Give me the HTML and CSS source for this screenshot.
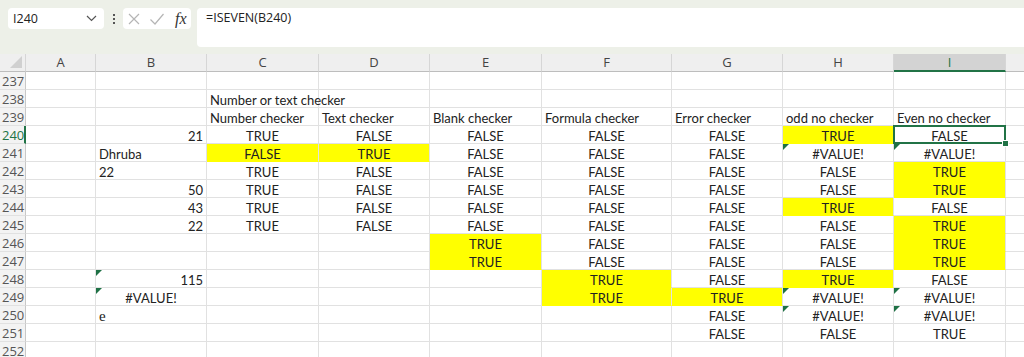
FILE: index.html
```html
<!DOCTYPE html>
<html lang="en">
<head>
    <meta charset="UTF-8">
    <meta name="viewport" content="width=device-width, initial-scale=1.0">
    <title>ISEVEN checker</title>
    <link rel="stylesheet" href="styles.css">
</head>
<body>

    <div class="topbar">
        <div class="namebox">
            <span>I240</span>
            <svg class="chev" width="11" height="7" viewBox="0 0 11 7"><path d="M1 1 L5.5 5.5 L10 1" fill="none" stroke="#555" stroke-width="1.2"/></svg>
        </div>
        <div class="dots"><i></i><i></i><i></i></div>
        <div class="fxbox">
            <svg width="14" height="14" viewBox="0 0 14 14"><path d="M2 2 L12 12 M12 2 L2 12" stroke="#b5b5b5" stroke-width="1.2"/></svg>
            <svg width="16" height="14" viewBox="0 0 16 14"><path d="M1.5 7.5 L6 12 L14.5 2" fill="none" stroke="#b5b5b5" stroke-width="1.2"/></svg>
            <span class="fx">fx</span>
        </div>
        <div class="formula">=ISEVEN(B240)</div>
    </div>

    <div class="sheet">
        <!-- column headers -->
        <div class="corner"><span></span></div>
        <div class="ch">A</div><div class="ch">B</div><div class="ch">C</div><div class="ch">D</div><div class="ch">E</div>
        <div class="ch">F</div><div class="ch">G</div><div class="ch">H</div><div class="ch sel">I</div><div class="ch"></div>

        <div class="rh">237</div>
        <div></div><div></div><div></div><div></div><div></div><div></div><div></div><div></div><div></div><div></div>

        <div class="rh">238</div>
        <div></div><div></div><div class="spill">Number or text checker</div><div></div><div></div><div></div><div></div><div></div><div></div><div></div>

        <div class="rh">239</div>
        <div></div><div></div><div>Number checker</div><div>Text checker</div><div>Blank checker</div><div>Formula checker</div><div>Error checker</div><div>odd no checker</div><div>Even no checker</div><div></div>

        <div class="rh cur">240</div>
        <div></div><div class="r">21</div><div class="c">TRUE</div><div class="c">FALSE</div><div class="c">FALSE</div><div class="c">FALSE</div><div class="c">FALSE</div><div class="c y">TRUE</div><div class="c active">FALSE</div><div></div>

        <div class="rh">241</div>
        <div></div><div>Dhruba</div><div class="c y">FALSE</div><div class="c y">TRUE</div><div class="c">FALSE</div><div class="c">FALSE</div><div class="c">FALSE</div><div class="c tri">#VALUE!</div><div class="c tri">#VALUE!</div><div></div>

        <div class="rh">242</div>
        <div></div><div>22</div><div class="c">TRUE</div><div class="c">FALSE</div><div class="c">FALSE</div><div class="c">FALSE</div><div class="c">FALSE</div><div class="c">FALSE</div><div class="c y">TRUE</div><div></div>

        <div class="rh">243</div>
        <div></div><div class="r">50</div><div class="c">TRUE</div><div class="c">FALSE</div><div class="c">FALSE</div><div class="c">FALSE</div><div class="c">FALSE</div><div class="c">FALSE</div><div class="c y">TRUE</div><div></div>

        <div class="rh">244</div>
        <div></div><div class="r">43</div><div class="c">TRUE</div><div class="c">FALSE</div><div class="c">FALSE</div><div class="c">FALSE</div><div class="c">FALSE</div><div class="c y">TRUE</div><div class="c">FALSE</div><div></div>

        <div class="rh">245</div>
        <div></div><div class="r">22</div><div class="c">TRUE</div><div class="c">FALSE</div><div class="c">FALSE</div><div class="c">FALSE</div><div class="c">FALSE</div><div class="c">FALSE</div><div class="c y">TRUE</div><div></div>

        <div class="rh">246</div>
        <div></div><div></div><div></div><div></div><div class="c y">TRUE</div><div class="c">FALSE</div><div class="c">FALSE</div><div class="c">FALSE</div><div class="c y">TRUE</div><div></div>

        <div class="rh">247</div>
        <div></div><div></div><div></div><div></div><div class="c y">TRUE</div><div class="c">FALSE</div><div class="c">FALSE</div><div class="c">FALSE</div><div class="c y">TRUE</div><div></div>

        <div class="rh">248</div>
        <div></div><div class="r tri">115</div><div></div><div></div><div></div><div class="c y">TRUE</div><div class="c">FALSE</div><div class="c y">TRUE</div><div class="c">FALSE</div><div></div>

        <div class="rh">249</div>
        <div></div><div class="c tri">#VALUE!</div><div></div><div></div><div></div><div class="c y">TRUE</div><div class="c y">TRUE</div><div class="c tri">#VALUE!</div><div class="c tri">#VALUE!</div><div></div>

        <div class="rh">250</div>
        <div></div><div class="serif">e</div><div></div><div></div><div></div><div></div><div class="c">FALSE</div><div class="c tri">#VALUE!</div><div class="c tri">#VALUE!</div><div></div>

        <div class="rh">251</div>
        <div></div><div></div><div></div><div></div><div></div><div></div><div class="c">FALSE</div><div class="c">FALSE</div><div class="c">TRUE</div><div></div>

        <div class="rh">252</div>
        <div></div><div></div><div></div><div></div><div></div><div></div><div></div><div></div><div></div><div></div>
    </div>

</body>
</html>
```

FILE: styles.css
```css
body { margin: 0; background: #fff; overflow: hidden; font-family: 'Open Sans', 'Liberation Sans', sans-serif; }

/* formula bar */
.topbar { display: flex; align-items: flex-start; height: 54px; padding: 8px 0 0 8px; box-sizing: border-box; background: #edf0e8; }
.namebox { width: 96px; height: 21px; box-sizing: border-box; background: #fff; border-radius: 4px; display: flex; align-items: center; justify-content: space-between; padding: 0 7px 0 5px; font-size: 12.5px; color: #222; }
.dots { width: 19px; height: 21px; display: flex; flex-direction: column; align-items: center; justify-content: center; gap: 2px; }
.dots i { width: 2px; height: 2px; background: #555; }
.fxbox { width: 68px; height: 21px; background: #fff; border-radius: 4px; display: flex; align-items: center; gap: 8px; padding-left: 4px; box-sizing: border-box; }
.fx { font-family: 'Liberation Serif', serif; font-style: italic; font-size: 16px; color: #333; margin-left: 2px; }
.formula { flex: 1; height: 39px; margin-left: 6px; margin-right: -6px; background: #fff; border-radius: 4px; padding: 1px 9px; box-sizing: border-box; font-size: 12.5px; color: #222; }

/* grid */
.sheet { display: grid; grid-template-columns: 26px 70px 111px 112px 111px 112px 130px 111px 111px 112px 40px; grid-auto-rows: 18px; font-family: Lato, 'Liberation Sans', sans-serif; font-size: 13px; color: #222; }
.sheet > div { box-sizing: border-box; border-right: 1px solid #e1e1e1; border-bottom: 1px solid #e1e1e1; padding: 1px 3px 0; line-height: 18px; white-space: nowrap; overflow: hidden; position: relative; }
.sheet > .spill { overflow: visible; z-index: 1; }
.sheet > .r { text-align: right; }
.sheet > .c { text-align: center; }
.sheet > .y { background: #ffff00; border-bottom-color: #ffff00; }
.sheet > .serif { font-family: 'Liberation Serif', serif; font-size: 15px; }

.ch, .corner { background: #efefef; border-bottom-color: #bdbdbd !important; border-right-color: #d6d6d6 !important; text-align: center; font-family: 'Open Sans', sans-serif; font-size: 13px; color: #444; line-height: 17px !important; padding-top: 0 !important; }
.ch.sel { background: #d3d3d3; color: #217346; border-bottom: 2px solid #217346 !important; }
.corner span { position: absolute; right: 3px; bottom: 3px; border-left: 12px solid transparent; border-bottom: 12px solid #d0d0d0; }
.rh { background: #f3f3f3; border-right-color: #c8c8c8 !important; text-align: right; font-family: 'Open Sans', sans-serif; font-size: 13px; color: #555; padding: 0 2px !important; }
.rh.cur { color: #217346; border-right: 2px solid #217346 !important; }

.tri::before { content: ''; position: absolute; top: 0; left: 0; border-top: 6px solid #1e7145; border-right: 6px solid transparent; }
.active { z-index: 2; overflow: visible !important; }
.active::after { content: ''; position: absolute; top: -1px; left: -1px; right: -1px; bottom: -1px; border: 2px solid #217346; }
.active::before { content: ''; position: absolute; right: -4px; bottom: -4px; width: 5px; height: 5px; background: #217346; border: 1px solid #fff; z-index: 3; }
```
